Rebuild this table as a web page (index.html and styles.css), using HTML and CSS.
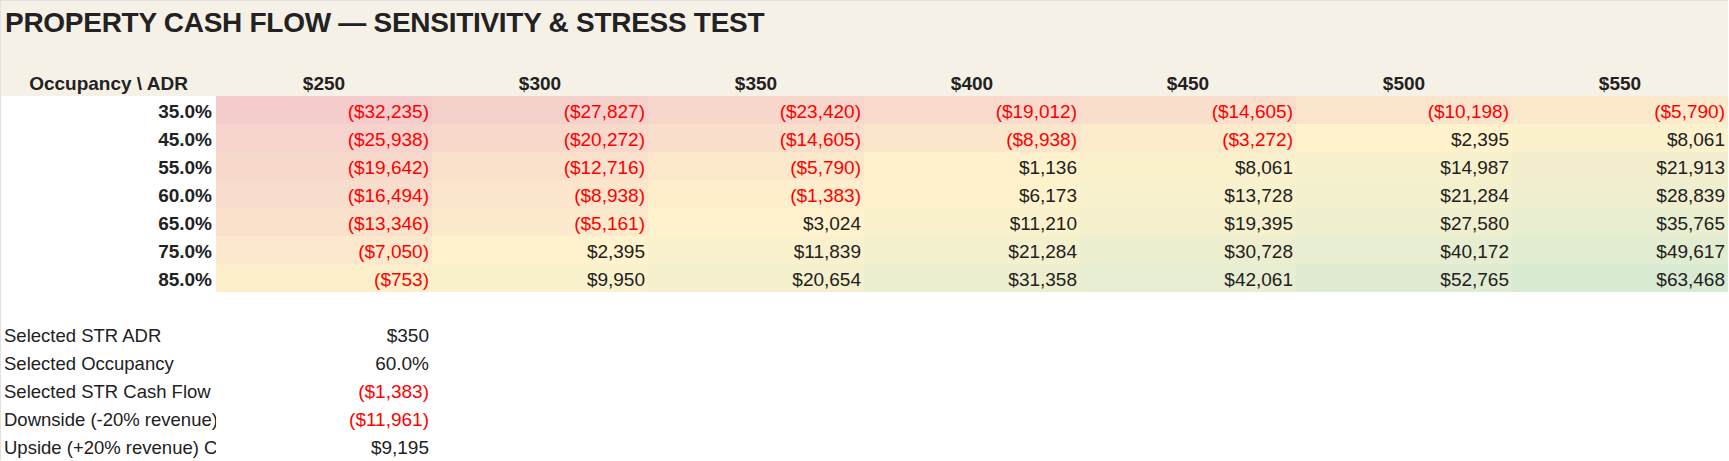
FILE: index.html
```html
<!DOCTYPE html>
<html lang="en">
<head>
<meta charset="utf-8">
<title>Property Cash Flow — Sensitivity &amp; Stress Test</title>
<link rel="stylesheet" href="styles.css">
</head>
<body>
<div class="sheet">
  <div class="band">
    <div class="title">PROPERTY CASH FLOW — SENSITIVITY &amp; STRESS TEST</div>
    <div class="spacer"></div>
    <div class="row">
      <div class="cell hdr">Occupancy \ ADR</div>
      <div class="cell hdr">$250</div>
      <div class="cell hdr">$300</div>
      <div class="cell hdr">$350</div>
      <div class="cell hdr">$400</div>
      <div class="cell hdr">$450</div>
      <div class="cell hdr">$500</div>
      <div class="cell hdr">$550</div>
    </div>
  </div>

  <div class="matrix">
    <div class="row">
      <div class="cell occ">35.0%</div>
      <div class="cell num neg" style="background:#F4CCCC">($32,235)</div>
      <div class="cell num neg" style="background:#F5D1CC">($27,827)</div>
      <div class="cell num neg" style="background:#F7D6CC">($23,420)</div>
      <div class="cell num neg" style="background:#F8DBCC">($19,012)</div>
      <div class="cell num neg" style="background:#FADFCC">($14,605)</div>
      <div class="cell num neg" style="background:#FBE4CC">($10,198)</div>
      <div class="cell num neg" style="background:#FCE9CC">($5,790)</div>
    </div>
    <div class="row">
      <div class="cell occ">45.0%</div>
      <div class="cell num neg" style="background:#F6D3CC">($25,938)</div>
      <div class="cell num neg" style="background:#F8D9CC">($20,272)</div>
      <div class="cell num neg" style="background:#FADFCC">($14,605)</div>
      <div class="cell num neg" style="background:#FBE6CC">($8,938)</div>
      <div class="cell num neg" style="background:#FDECCC">($3,272)</div>
      <div class="cell num" style="background:#FFF2CC">$2,395</div>
      <div class="cell num" style="background:#FBF1CD">$8,061</div>
    </div>
    <div class="row">
      <div class="cell occ">55.0%</div>
      <div class="cell num neg" style="background:#F8DACC">($19,642)</div>
      <div class="cell num neg" style="background:#FAE1CC">($12,716)</div>
      <div class="cell num neg" style="background:#FCE9CC">($5,790)</div>
      <div class="cell num" style="background:#FFF1CC">$1,136</div>
      <div class="cell num" style="background:#FBF1CD">$8,061</div>
      <div class="cell num" style="background:#F7F0CD">$14,987</div>
      <div class="cell num" style="background:#F3EFCE">$21,913</div>
    </div>
    <div class="row">
      <div class="cell occ">60.0%</div>
      <div class="cell num neg" style="background:#F9DDCC">($16,494)</div>
      <div class="cell num neg" style="background:#FBE6CC">($8,938)</div>
      <div class="cell num neg" style="background:#FEEECC">($1,383)</div>
      <div class="cell num" style="background:#FDF2CC">$6,173</div>
      <div class="cell num" style="background:#F8F1CD">$13,728</div>
      <div class="cell num" style="background:#F3F0CE">$21,284</div>
      <div class="cell num" style="background:#EFEFCF">$28,839</div>
    </div>
    <div class="row">
      <div class="cell occ">65.0%</div>
      <div class="cell num neg" style="background:#FAE1CC">($13,346)</div>
      <div class="cell num neg" style="background:#FDEACC">($5,161)</div>
      <div class="cell num" style="background:#FFF2CC">$3,024</div>
      <div class="cell num" style="background:#FAF1CD">$11,210</div>
      <div class="cell num" style="background:#F4F0CE">$19,395</div>
      <div class="cell num" style="background:#EFEFCF">$27,580</div>
      <div class="cell num" style="background:#EAEED0">$35,765</div>
    </div>
    <div class="row">
      <div class="cell occ">75.0%</div>
      <div class="cell num neg" style="background:#FCE8CC">($7,050)</div>
      <div class="cell num" style="background:#FFF2CC">$2,395</div>
      <div class="cell num" style="background:#F9F1CD">$11,839</div>
      <div class="cell num" style="background:#F3F0CE">$21,284</div>
      <div class="cell num" style="background:#EDEECF">$30,728</div>
      <div class="cell num" style="background:#E7EDD0">$40,172</div>
      <div class="cell num" style="background:#E2ECD1">$49,617</div>
    </div>
    <div class="row">
      <div class="cell occ">85.0%</div>
      <div class="cell num neg" style="background:#FEEFCC">($753)</div>
      <div class="cell num" style="background:#FAF1CD">$9,950</div>
      <div class="cell num" style="background:#F4F0CE">$20,654</div>
      <div class="cell num" style="background:#EDEECF">$31,358</div>
      <div class="cell num" style="background:#E6EDD1">$42,061</div>
      <div class="cell num" style="background:#E0EBD2">$52,765</div>
      <div class="cell num" style="background:#D9EAD3">$63,468</div>
    </div>
  </div>

  <div class="spacer"></div>

  <div class="summary">
    <div class="row">
      <div class="cell key">Selected STR ADR</div>
      <div class="cell num">$350</div>
    </div>
    <div class="row">
      <div class="cell key">Selected Occupancy</div>
      <div class="cell num">60.0%</div>
    </div>
    <div class="row">
      <div class="cell key">Selected STR Cash Flow</div>
      <div class="cell num neg">($1,383)</div>
    </div>
    <div class="row">
      <div class="cell key">Downside (-20% revenue) Cash Flow</div>
      <div class="cell num neg">($11,961)</div>
    </div>
    <div class="row">
      <div class="cell key">Upside (+20% revenue) Cash Flow</div>
      <div class="cell num">$9,195</div>
    </div>
  </div>
</div>
</body>
</html>
```

FILE: styles.css
```css
html, body {
  margin: 0;
  padding: 0;
  background: #ffffff;
}

body {
  font-family: "Liberation Sans", Arial, sans-serif;
  color: #212121;
}

.sheet {
  width: 1727px;
  border-top: 1px solid #e1e1e1;
  border-left: 1px solid #e1e1e1;
}

.band {
  background: #f6f1e7;
}

.title {
  height: 39px;
  box-sizing: border-box;
  padding: 4px 0 0 4px;
  line-height: 35px;
  font-size: 28px;
  font-weight: 700;
  letter-spacing: -0.28px;
  color: #222222;
  white-space: nowrap;
}

.spacer {
  height: 28px;
}

.row {
  display: grid;
  grid-template-columns: 215px repeat(7, 216px);
  height: 28px;
}

.cell {
  box-sizing: border-box;
  height: 28px;
  padding-top: 4px;
  line-height: 24px;
  font-size: 19px;
  white-space: nowrap;
  overflow: hidden;
}

.hdr {
  font-weight: 700;
  text-align: center;
  color: #222222;
}

.occ {
  font-weight: 700;
  text-align: right;
  padding-right: 4px;
  color: #222222;
}

.num {
  text-align: right;
  padding-right: 3px;
}

.neg {
  color: #ff0000;
}

.key {
  font-size: 18.5px;
  padding-left: 3px;
  text-overflow: clip;
}
```
